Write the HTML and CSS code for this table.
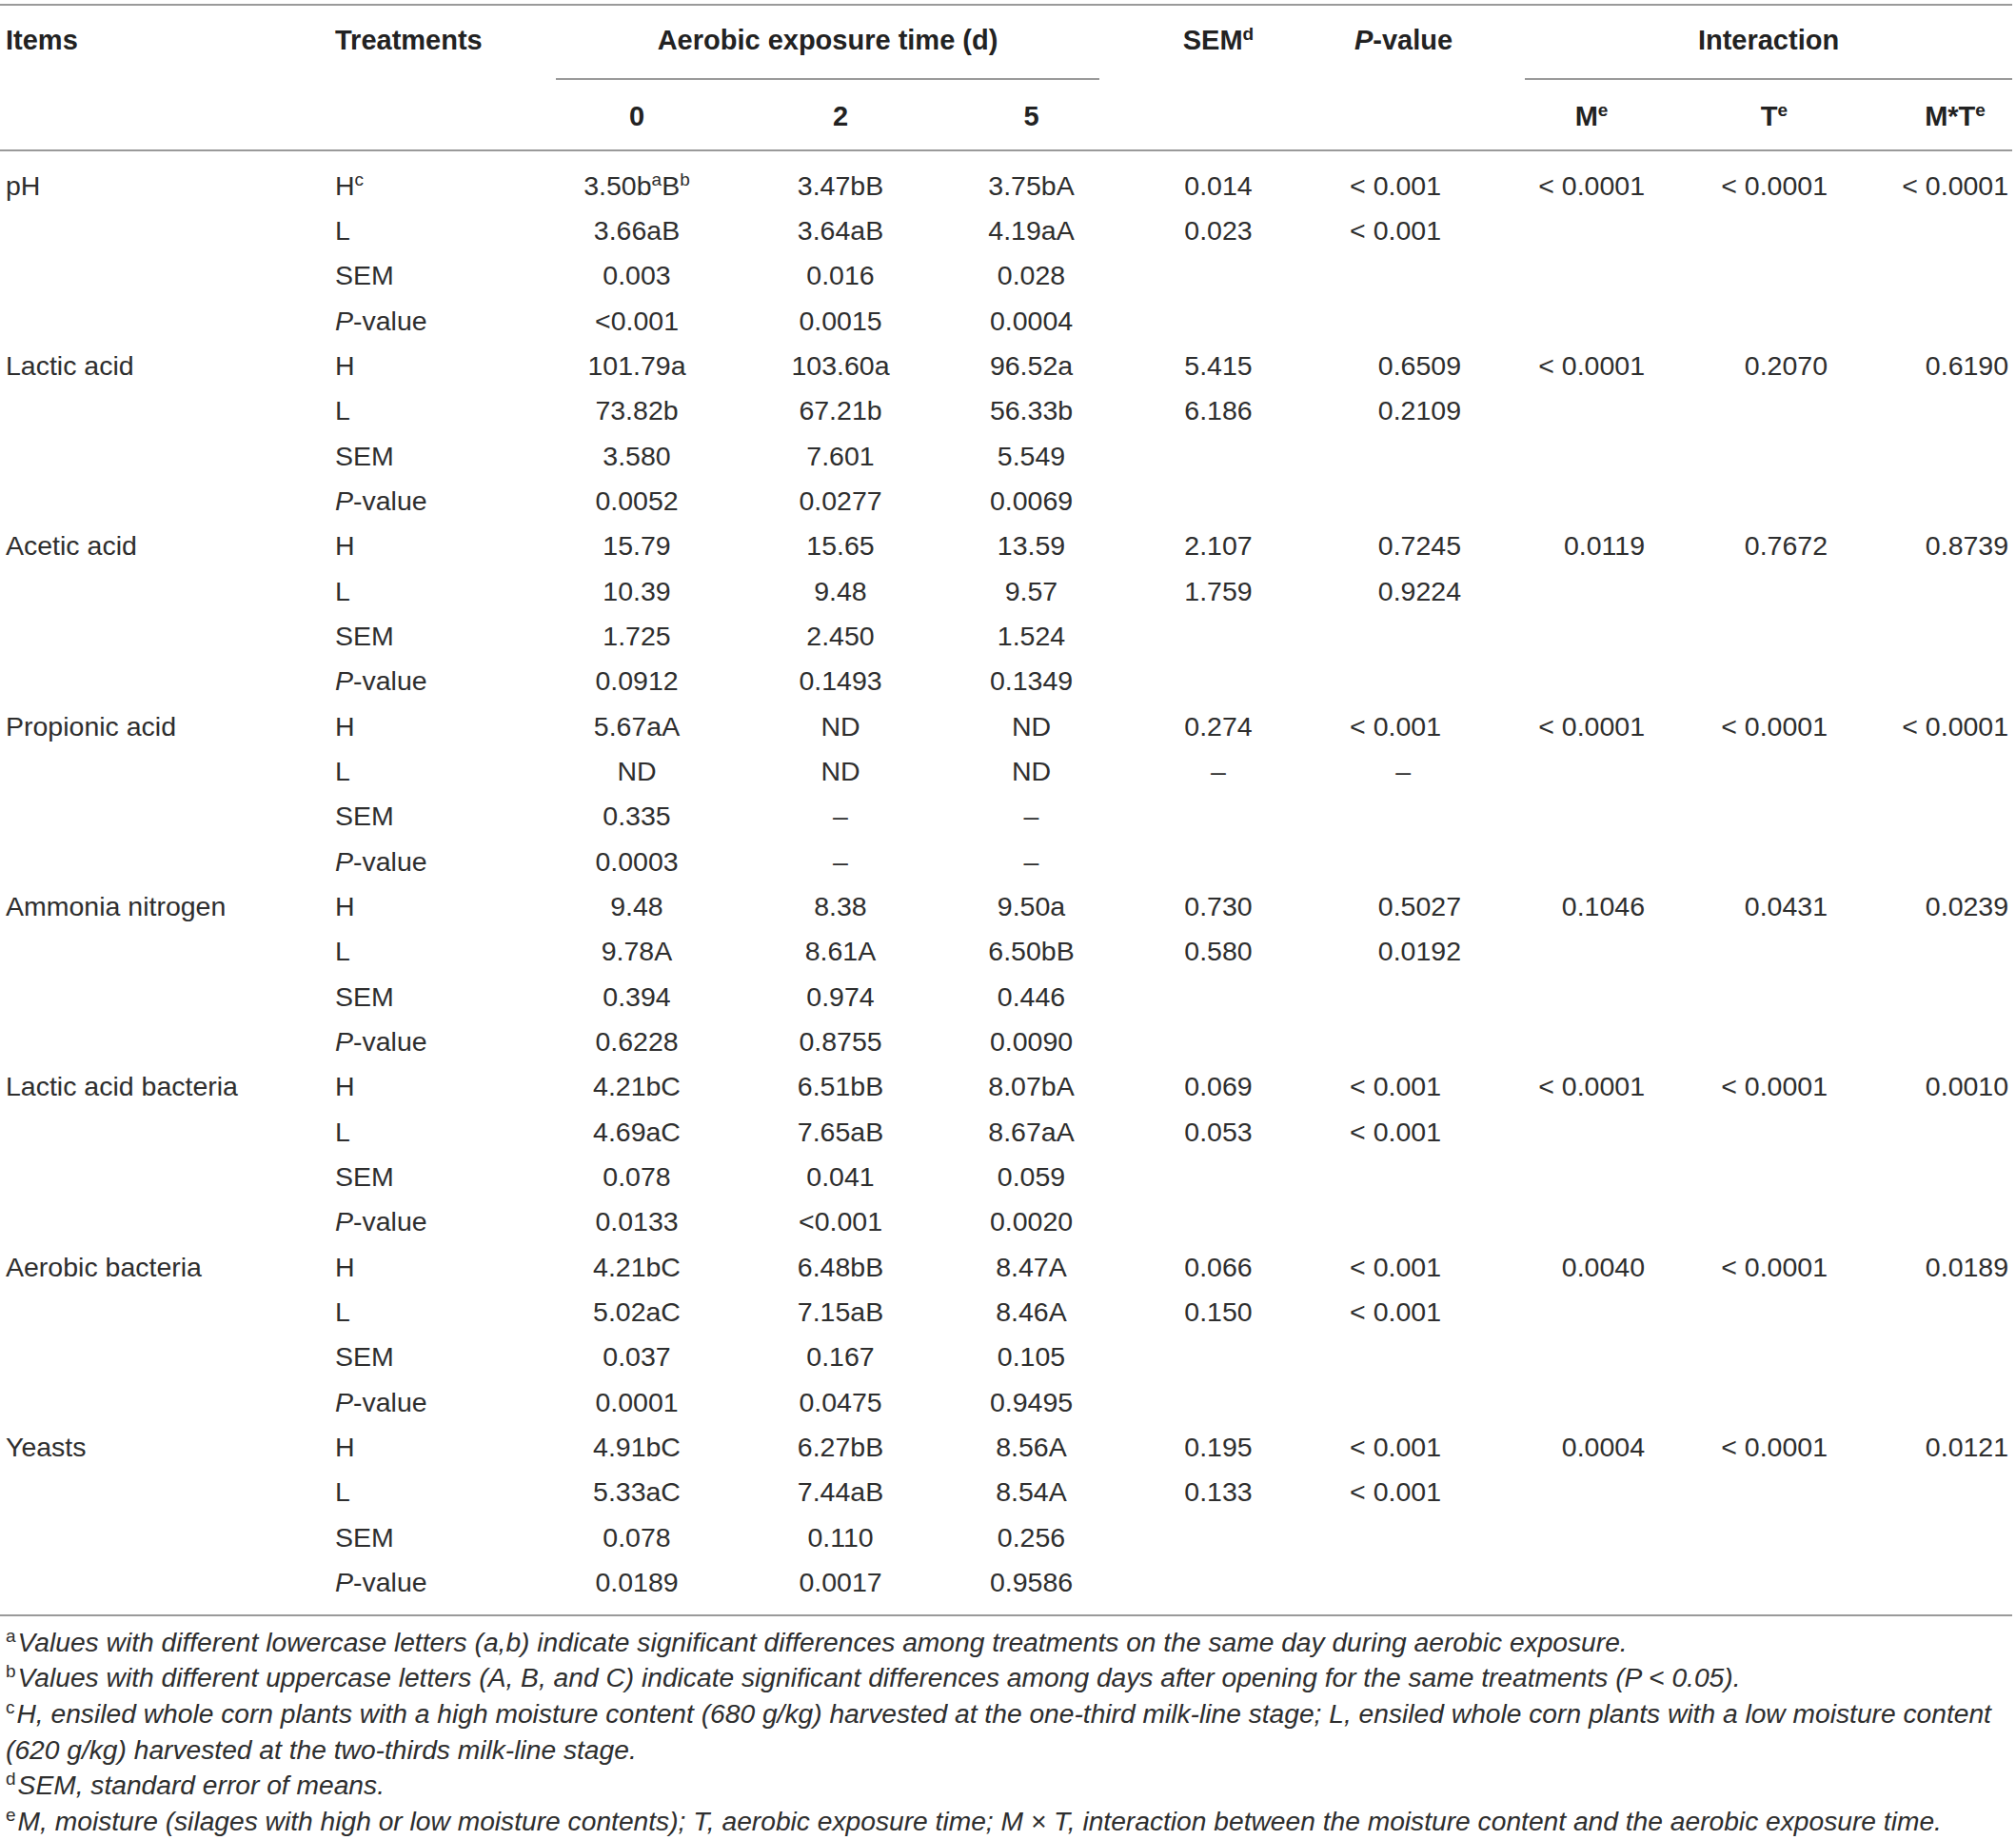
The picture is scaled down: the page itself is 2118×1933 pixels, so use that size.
FILE: index.html
```html
<!DOCTYPE html>
<html lang="en">

<head>
    <meta charset="UTF-8">
    <title>Aerobic exposure table</title>
    <link rel="stylesheet" href="styles.css">
</head>

<body>
    <table class="data-table">
        <colgroup>
            <col style="width:340px">
            <col style="width:244px">
            <col style="width:170px">
            <col style="width:258px">
            <col style="width:143px">
            <col style="width:250px">
            <col style="width:197px">
            <col style="width:128px">
            <col style="width:192px">
            <col style="width:192px">
        </colgroup>
        <thead>
            <tr class="head-top">
                <th rowspan="2" class="th-item">Items</th>
                <th rowspan="2" class="th-treat">Treatments</th>
                <th colspan="3" class="th-group">Aerobic exposure time (d)</th>
                <th rowspan="2" class="th-span">SEM<sup>d</sup></th>
                <th rowspan="2" class="th-span th-pval"><i>P</i>-value</th>
                <th colspan="3" class="th-group">Interaction</th>
            </tr>
            <tr class="head-sub">
                <th>0</th>
                <th>2</th>
                <th>5</th>
                <th class="th-right"><span class="ctr">M<sup>e</sup></span></th>
                <th class="th-right"><span class="ctr">T<sup>e</sup></span></th>
                <th class="th-right th-last"><span class="ctr">M*T<sup>e</sup></span></th>
            </tr>
        </thead>
        <tbody>
            <tr><td>pH</td><td>H<sup>c</sup></td><td>3.50b<sup>a</sup>B<sup>b</sup></td><td>3.47bB</td><td>3.75bA</td><td>0.014</td><td class="p-lt">&lt; 0.001</td><td>&lt; 0.0001</td><td>&lt; 0.0001</td><td>&lt; 0.0001</td></tr>
            <tr><td></td><td>L</td><td>3.66aB</td><td>3.64aB</td><td>4.19aA</td><td>0.023</td><td class="p-lt">&lt; 0.001</td><td></td><td></td><td></td></tr>
            <tr><td></td><td>SEM</td><td>0.003</td><td>0.016</td><td>0.028</td><td></td><td></td><td></td><td></td><td></td></tr>
            <tr><td></td><td><i>P</i>-value</td><td>&lt;0.001</td><td>0.0015</td><td>0.0004</td><td></td><td></td><td></td><td></td><td></td></tr>

            <tr><td>Lactic acid</td><td>H</td><td>101.79a</td><td>103.60a</td><td>96.52a</td><td>5.415</td><td>0.6509</td><td>&lt; 0.0001</td><td>0.2070</td><td>0.6190</td></tr>
            <tr><td></td><td>L</td><td>73.82b</td><td>67.21b</td><td>56.33b</td><td>6.186</td><td>0.2109</td><td></td><td></td><td></td></tr>
            <tr><td></td><td>SEM</td><td>3.580</td><td>7.601</td><td>5.549</td><td></td><td></td><td></td><td></td><td></td></tr>
            <tr><td></td><td><i>P</i>-value</td><td>0.0052</td><td>0.0277</td><td>0.0069</td><td></td><td></td><td></td><td></td><td></td></tr>

            <tr><td>Acetic acid</td><td>H</td><td>15.79</td><td>15.65</td><td>13.59</td><td>2.107</td><td>0.7245</td><td>0.0119</td><td>0.7672</td><td>0.8739</td></tr>
            <tr><td></td><td>L</td><td>10.39</td><td>9.48</td><td>9.57</td><td>1.759</td><td>0.9224</td><td></td><td></td><td></td></tr>
            <tr><td></td><td>SEM</td><td>1.725</td><td>2.450</td><td>1.524</td><td></td><td></td><td></td><td></td><td></td></tr>
            <tr><td></td><td><i>P</i>-value</td><td>0.0912</td><td>0.1493</td><td>0.1349</td><td></td><td></td><td></td><td></td><td></td></tr>

            <tr><td>Propionic acid</td><td>H</td><td>5.67aA</td><td>ND</td><td>ND</td><td>0.274</td><td class="p-lt">&lt; 0.001</td><td>&lt; 0.0001</td><td>&lt; 0.0001</td><td>&lt; 0.0001</td></tr>
            <tr><td></td><td>L</td><td>ND</td><td>ND</td><td>ND</td><td>–</td><td class="p-na">–</td><td></td><td></td><td></td></tr>
            <tr><td></td><td>SEM</td><td>0.335</td><td>–</td><td>–</td><td></td><td></td><td></td><td></td><td></td></tr>
            <tr><td></td><td><i>P</i>-value</td><td>0.0003</td><td>–</td><td>–</td><td></td><td></td><td></td><td></td><td></td></tr>

            <tr><td>Ammonia nitrogen</td><td>H</td><td>9.48</td><td>8.38</td><td>9.50a</td><td>0.730</td><td>0.5027</td><td>0.1046</td><td>0.0431</td><td>0.0239</td></tr>
            <tr><td></td><td>L</td><td>9.78A</td><td>8.61A</td><td>6.50bB</td><td>0.580</td><td>0.0192</td><td></td><td></td><td></td></tr>
            <tr><td></td><td>SEM</td><td>0.394</td><td>0.974</td><td>0.446</td><td></td><td></td><td></td><td></td><td></td></tr>
            <tr><td></td><td><i>P</i>-value</td><td>0.6228</td><td>0.8755</td><td>0.0090</td><td></td><td></td><td></td><td></td><td></td></tr>

            <tr><td>Lactic acid bacteria</td><td>H</td><td>4.21bC</td><td>6.51bB</td><td>8.07bA</td><td>0.069</td><td class="p-lt">&lt; 0.001</td><td>&lt; 0.0001</td><td>&lt; 0.0001</td><td>0.0010</td></tr>
            <tr><td></td><td>L</td><td>4.69aC</td><td>7.65aB</td><td>8.67aA</td><td>0.053</td><td class="p-lt">&lt; 0.001</td><td></td><td></td><td></td></tr>
            <tr><td></td><td>SEM</td><td>0.078</td><td>0.041</td><td>0.059</td><td></td><td></td><td></td><td></td><td></td></tr>
            <tr><td></td><td><i>P</i>-value</td><td>0.0133</td><td>&lt;0.001</td><td>0.0020</td><td></td><td></td><td></td><td></td><td></td></tr>

            <tr><td>Aerobic bacteria</td><td>H</td><td>4.21bC</td><td>6.48bB</td><td>8.47A</td><td>0.066</td><td class="p-lt">&lt; 0.001</td><td>0.0040</td><td>&lt; 0.0001</td><td>0.0189</td></tr>
            <tr><td></td><td>L</td><td>5.02aC</td><td>7.15aB</td><td>8.46A</td><td>0.150</td><td class="p-lt">&lt; 0.001</td><td></td><td></td><td></td></tr>
            <tr><td></td><td>SEM</td><td>0.037</td><td>0.167</td><td>0.105</td><td></td><td></td><td></td><td></td><td></td></tr>
            <tr><td></td><td><i>P</i>-value</td><td>0.0001</td><td>0.0475</td><td>0.9495</td><td></td><td></td><td></td><td></td><td></td></tr>

            <tr><td>Yeasts</td><td>H</td><td>4.91bC</td><td>6.27bB</td><td>8.56A</td><td>0.195</td><td class="p-lt">&lt; 0.001</td><td>0.0004</td><td>&lt; 0.0001</td><td>0.0121</td></tr>
            <tr><td></td><td>L</td><td>5.33aC</td><td>7.44aB</td><td>8.54A</td><td>0.133</td><td class="p-lt">&lt; 0.001</td><td></td><td></td><td></td></tr>
            <tr><td></td><td>SEM</td><td>0.078</td><td>0.110</td><td>0.256</td><td></td><td></td><td></td><td></td><td></td></tr>
            <tr><td></td><td><i>P</i>-value</td><td>0.0189</td><td>0.0017</td><td>0.9586</td><td></td><td></td><td></td><td></td><td></td></tr>
        </tbody>
    </table>

    <div class="notes">
        <p><sup>a</sup>Values with different lowercase letters (a,b) indicate significant differences among treatments on the same day during aerobic exposure.</p>
        <p><sup>b</sup>Values with different uppercase letters (A, B, and C) indicate significant differences among days after opening for the same treatments (P &lt; 0.05).</p>
        <p><sup>c</sup>H, ensiled whole corn plants with a high moisture content (680 g/kg) harvested at the one-third milk-line stage; L, ensiled whole corn plants with a low moisture content (620 g/kg) harvested at the two-thirds milk-line stage.</p>
        <p><sup>d</sup>SEM, standard error of means.</p>
        <p><sup>e</sup>M, moisture (silages with high or low moisture contents); T, aerobic exposure time; M × T, interaction between the moisture content and the aerobic exposure time.</p>
    </div>
</body>
</html>
```

FILE: styles.css
```css
body {
    margin: 0;
    background-color: #ffffff;
    font-family: "Liberation Sans", Arial, sans-serif;
    color: #2e2e2e;
}

.data-table {
    width: 2114px;
    margin-top: 4px;
    border-collapse: separate;
    border-spacing: 0;
    table-layout: fixed;
    font-size: 28.5px;
}

sup {
    font-size: 19px;
    line-height: 0;
    vertical-align: 10px;
}

/* header */
th {
    padding: 0;
    font-size: 29px;
    font-weight: 700;
    color: #222222;
    line-height: 34px;
    vertical-align: top;
    text-align: center;
    white-space: nowrap;
}

.head-top th {
    border-top: 2px solid #9a9a9a;
    padding-top: 19px;
    padding-bottom: 23px;
}

.head-sub th {
    padding-top: 21px;
    padding-bottom: 18px;
    border-bottom: 2px solid #9a9a9a;
}

.th-item,
.th-treat,
.th-span {
    border-bottom: 2px solid #9a9a9a;
}

.th-item {
    text-align: left;
    padding-left: 6px;
}

.th-treat {
    text-align: left;
    padding-left: 12px;
}

.th-group {
    border-bottom: 2px solid #9a9a9a;
}

.th-pval {
    padding-right: 58px;
}

.head-sub .th-right {
    text-align: right;
    padding-right: 2px;
}

.head-sub .th-last {
    padding-right: 4px;
}

.ctr {
    display: inline-block;
    width: 112px;
    text-align: center;
}

/* body */
td {
    height: 47.33px;
    padding: 0;
    line-height: 34px;
    vertical-align: middle;
    text-align: center;
    white-space: nowrap;
}

td:nth-child(1) {
    text-align: left;
    padding-left: 6px;
}

td:nth-child(2) {
    text-align: left;
    padding-left: 12px;
}

/* P-value column: numbers sit right, "< 0.001" and dash a little to the left */
td:nth-child(7) {
    text-align: right;
    padding-right: 67px;
}

td.p-lt {
    padding-right: 88px;
}

td.p-na {
    padding-right: 120px;
}

td:nth-child(8),
td:nth-child(9) {
    text-align: right;
    padding-right: 2px;
}

td:nth-child(10) {
    text-align: right;
    padding-right: 4px;
}

tbody tr:first-child td {
    padding-top: 12px;
}

tbody tr:last-child td {
    padding-bottom: 10px;
    border-bottom: 2px solid #9a9a9a;
}

/* footnotes */
.notes {
    margin-top: 9px;
    padding-left: 6px;
    width: 2110px;
    font-size: 28.2px;
    line-height: 37.7px;
    font-style: italic;
    color: #2e2e2e;
}

.notes p {
    margin: 0;
}

.notes sup {
    font-style: normal;
    margin-right: 2px;
}
```
